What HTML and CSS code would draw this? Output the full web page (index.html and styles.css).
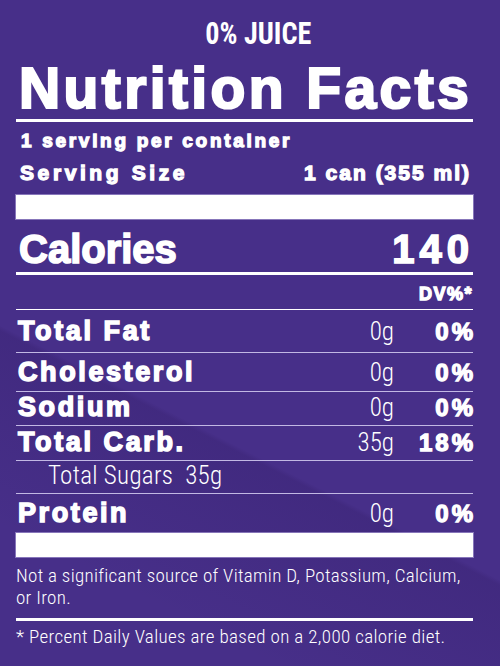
FILE: index.html
```html
<!DOCTYPE html>
<html lang="en">
<head>
  <meta charset="UTF-8">
  <meta name="viewport" content="width=device-width, initial-scale=1.0">
  <title>Nutrition Facts</title>
  <link rel="stylesheet" href="styles.css">
</head>
<body>
  <div class="label">
    <div class="juice"><span>0% JUICE</span></div>
    <h1 class="title">Nutrition Facts</h1>

    <div class="servings">1 serving per container</div>
    <div class="row serving-size">
      <span class="size-name">Serving Size</span>
      <span class="size-val">1 can (355 ml)</span>
    </div>
    <div class="bar"></div>

    <div class="row calories">
      <span>Calories</span>
      <span class="kcal">140</span>
    </div>
    <div class="dv">DV%*</div>

    <div class="row nutrient fat"><span class="name">Total Fat</span><span class="amt">0g</span><span class="pct">0%</span></div>
    <div class="row nutrient chol"><span class="name">Cholesterol</span><span class="amt">0g</span><span class="pct">0%</span></div>
    <div class="row nutrient sodium"><span class="name">Sodium</span><span class="amt">0g</span><span class="pct">0%</span></div>
    <div class="row nutrient carb"><span class="name">Total Carb.</span><span class="amt">35g</span><span class="pct">18%</span></div>
    <div class="row sub">Total Sugars&nbsp; 35g</div>
    <div class="row nutrient protein"><span class="name">Protein</span><span class="amt">0g</span><span class="pct">0%</span></div>
    <div class="bar"></div>

    <p class="note">Not a significant source of Vitamin D, Potassium, Calcium, or Iron.</p>
    <p class="foot">* Percent Daily Values are based on a 2,000 calorie diet.</p>
  </div>
</body>
</html>
```

FILE: styles.css
```css
html, body {
  margin: 0;
  height: 100%;
}
body {
  background: #472f89;
  background-image: linear-gradient(207deg, rgba(30, 10, 70, 0) 63%, rgba(30, 10, 70, 0.14) 63.6%, rgba(30, 10, 70, 0) 85%);
  color: #ffffff;
  font-family: "Liberation Sans", Arial, sans-serif;
  font-weight: bold;
  -webkit-text-stroke: 1.3px #ffffff;
}
.label {
  width: 457px;
  margin-left: 16px;
}
.juice {
  font-family: "Roboto Condensed", sans-serif;
  font-size: 32px;
  line-height: 54px;
  padding: 6px 0 0 28px;
  text-align: center;
  -webkit-text-stroke: 0;
}
.juice span {
  display: inline-block;
  transform: scaleX(0.88);
}
.title {
  margin: 0;
  font-size: 57px;
  line-height: 56px;
  letter-spacing: 3.4px;
  padding: 0 0 3px 3px;
  border-bottom: 3px solid #ffffff;
  white-space: nowrap;
  -webkit-text-stroke: 2.2px #ffffff;
}
.servings {
  font-size: 19px;
  line-height: 30px;
  letter-spacing: 2.7px;
  padding: 4px 0 0 5px;
}
.row {
  display: flex;
  align-items: baseline;
  box-sizing: border-box;
}
.serving-size {
  justify-content: space-between;
  font-size: 21px;
  line-height: 28px;
  padding: 3px 2px 0 4px;
}
.size-name {
  letter-spacing: 3.6px;
}
.size-val {
  letter-spacing: 2px;
}
.bar {
  height: 24px;
  margin-top: 8px;
  background: #ffffff;
  box-shadow: 0 0 0 1px rgba(200, 190, 235, 0.5);
}
.calories {
  justify-content: space-between;
  font-size: 40px;
  line-height: 44px;
  padding: 8px 2px 1px 3px;
  border-bottom: 3px solid #ffffff;
  -webkit-text-stroke: 1.6px #ffffff;
}
.kcal {
  letter-spacing: 5px;
  margin-right: -3px;
}
.dv {
  font-size: 18px;
  line-height: 20px;
  letter-spacing: 1.5px;
  text-align: right;
  padding: 9px 0 5px;
  border-bottom: 1px solid #ffffff;
}
.nutrient {
  font-size: 27px;
  line-height: 30px;
  border-bottom: 1px solid #c2b8e4;
}
.nutrient .name {
  flex: 1;
  padding-left: 2px;
  letter-spacing: 2.6px;
  -webkit-text-stroke: 1.5px #ffffff;
}
.amt,
.sub,
.note,
.foot {
  font-family: "Roboto Condensed", sans-serif;
  font-weight: 300;
  -webkit-text-stroke: 0;
}
.amt {
  font-size: 25px;
}
.pct {
  width: 82px;
  font-size: 24px;
  letter-spacing: 3px;
  margin-right: -3px;
  text-align: right;
}
.fat {
  height: 43px;
  padding-top: 6px;
}
.chol {
  height: 39px;
  padding-top: 4px;
}
.sodium {
  height: 34px;
  padding-top: 0;
}
.carb {
  height: 35px;
  padding-top: 1px;
}
.sub {
  height: 33px;
  font-size: 25px;
  line-height: 30px;
  letter-spacing: 0.3px;
  padding: 0 0 0 32px;
  border-bottom: 1px solid #c2b8e4;
}
.protein {
  height: 39px;
  padding-top: 4px;
  border-bottom: none;
}
.protein + .bar {
  margin-top: 0;
}
.note {
  margin: 0;
  font-size: 19px;
  line-height: 22px;
  letter-spacing: 0.3px;
  padding: 8px 0 9px;
  border-bottom: 3px solid #ffffff;
}
.foot {
  margin: 0;
  font-size: 19px;
  line-height: 22px;
  letter-spacing: 0.35px;
  padding-top: 5px;
}
```
